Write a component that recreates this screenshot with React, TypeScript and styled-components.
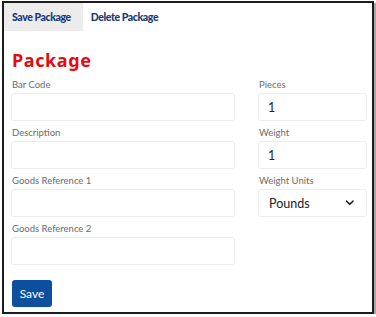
import React from "react";
import styled, { createGlobalStyle } from "styled-components";
import { FaChevronDown } from "react-icons/fa";

const GlobalStyle = createGlobalStyle`
  html, body {
    margin: 0;
    padding: 0;
    background: #ffffff;
  }
  * {
    box-sizing: border-box;
  }
`;

const Frame = styled.div`
  margin: 1px 0 0 2px;
  width: 372px;
  height: 313px;
  border: 2px solid #1c1c1c;
  box-shadow: 2px 2px 0 #a8a8a8;
  background: #fff;
  font-family: Lato, "Open Sans", sans-serif;
  overflow: hidden;
`;

const TabBar = styled.div`
  display: flex;
  height: 28px;
`;

const Tab = styled.div<{ $active?: boolean }>`
  display: flex;
  align-items: center;
  padding: 0 12px 1px 8px;
  height: 100%;
  background: ${(p) => (p.$active ? "#ececec" : "transparent")};
  color: #17397a;
  font-size: 10.5px;
  font-weight: 900;
  letter-spacing: -0.4px;
`;

const Form = styled.div`
  padding: 18px 6px 0 7px;
`;

const Heading = styled.h2`
  margin: 0 0 8px 1px;
  font-family: "Noto Sans", sans-serif;
  font-size: 18px;
  line-height: 22px;
  font-weight: 700;
  letter-spacing: 0.6px;
  color: #e10d0d;
`;

const Columns = styled.div`
  display: grid;
  grid-template-columns: 224px 109px;
  column-gap: 23px;
  align-items: start;
`;

const Column = styled.div`
  display: flex;
  flex-direction: column;
  gap: 6px;
`;

const Field = styled.div`
  display: flex;
  flex-direction: column;
  gap: 2px;
`;

const Label = styled.label`
  font-size: 9.5px;
  line-height: 12px;
  color: #6b6b6b;
  padding-left: 1px;
`;

const Input = styled.input`
  width: 100%;
  height: 28px;
  border: 1px solid #ededed;
  border-radius: 3px;
  padding: 0 9px;
  font-family: Lato, sans-serif;
  font-size: 12.5px;
  color: #222;
  background: #fff;
  outline: none;
`;

const SelectBox = styled.div`
  display: flex;
  align-items: center;
  justify-content: space-between;
  height: 28px;
  border: 1px solid #ededed;
  border-radius: 3px;
  padding: 0 12px 0 10px;
  font-size: 12.5px;
  color: #222;
  svg {
    font-size: 9.5px;
    color: #111;
  }
`;

const SaveButton = styled.button`
  margin: 15px 0 0 1px;
  width: 40px;
  height: 27px;
  border: none;
  border-radius: 3px;
  background: #0c4f9f;
  color: #fff;
  font-family: Lato, sans-serif;
  font-size: 12px;
  padding: 0;
`;

export default function App() {
  return (
    <>
      <GlobalStyle />
      <Frame>
        <TabBar>
          <Tab $active>Save Package</Tab>
          <Tab>Delete Package</Tab>
        </TabBar>
        <Form>
          <Heading>Package</Heading>
          <Columns>
            <Column>
              <Field>
                <Label>Bar Code</Label>
                <Input />
              </Field>
              <Field>
                <Label>Description</Label>
                <Input />
              </Field>
              <Field>
                <Label>Goods Reference 1</Label>
                <Input />
              </Field>
              <Field>
                <Label>Goods Reference 2</Label>
                <Input />
              </Field>
            </Column>
            <Column>
              <Field>
                <Label>Pieces</Label>
                <Input defaultValue="1" />
              </Field>
              <Field>
                <Label>Weight</Label>
                <Input defaultValue="1" />
              </Field>
              <Field>
                <Label>Weight Units</Label>
                <SelectBox>
                  <span>Pounds</span>
                  <FaChevronDown />
                </SelectBox>
              </Field>
            </Column>
          </Columns>
          <SaveButton>Save</SaveButton>
        </Form>
      </Frame>
    </>
  );
}
